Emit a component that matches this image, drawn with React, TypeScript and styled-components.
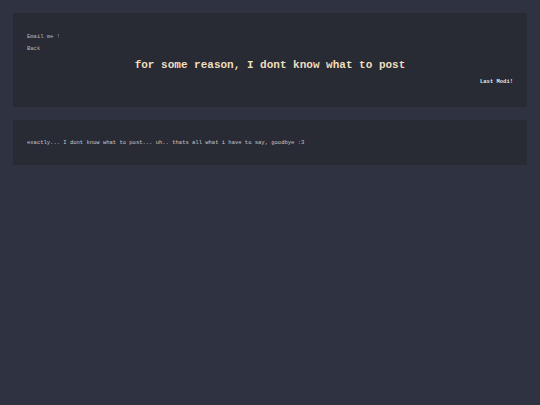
import { createGlobalStyle } from "styled-components";
import styled from "styled-components";

const GlobalStyle = createGlobalStyle`
  html, body {
    margin: 0;
    padding: 0;
    background: #2f3241;
    min-height: 100%;
  }
  body {
    font-family: "Liberation Mono", "DejaVu Sans Mono", monospace;
  }
`;

const Page = styled.main`
  display: flex;
  flex-direction: column;
  gap: 13px;
  padding: 13px;
`;

const Card = styled.section<{ $pad: string }>`
  background: #282a34;
  padding: ${(p) => p.$pad};
  display: flex;
  flex-direction: column;
`;

const NavLink = styled.a`
  display: block;
  font-size: 5.5px;
  line-height: 8px;
  color: #b9bac0;
  text-decoration: none;
  & + & {
    margin-top: 4px;
  }
`;

const Title = styled.h1`
  margin: 5px 0 0;
  font-size: 11px;
  line-height: 14px;
  font-weight: 700;
  color: #eedfbf;
  text-align: center;
`;

const Modified = styled.div`
  margin-top: 6px;
  align-self: flex-end;
  font-size: 5.5px;
  line-height: 8px;
  font-weight: 700;
  color: #e6e6e6;
`;

const Body = styled.p`
  margin: 0;
  font-size: 5.5px;
  line-height: 8px;
  color: #c8c8cc;
`;

export default function App() {
  return (
    <>
      <GlobalStyle />
      <Page>
        <Card $pad="20px 14px 21px">
          <NavLink href="#">Email me !</NavLink>
          <NavLink href="#">Back</NavLink>
          <Title>for some reason, I dont know what to post</Title>
          <Modified>Last Modi!</Modified>
        </Card>
        <Card $pad="19px 14px 18px">
          <Body>
            exactly... I dont know what to post... uh.. thats all what i have to say, goodbye :3
          </Body>
        </Card>
      </Page>
    </>
  );
}
